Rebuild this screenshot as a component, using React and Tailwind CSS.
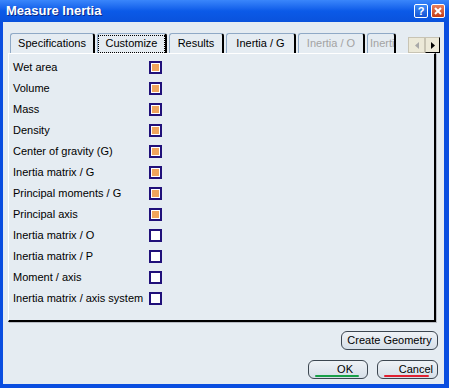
import React from "react";

const rows = [
  ["Wet area", true],
  ["Volume", true],
  ["Mass", true],
  ["Density", true],
  ["Center of gravity (G)", true],
  ["Inertia matrix / G", true],
  ["Principal moments / G", true],
  ["Principal axis", true],
  ["Inertia matrix / O", false],
  ["Inertia matrix / P", false],
  ["Moment / axis", false],
  ["Inertia matrix / axis system", false],
];

function Tab({ label, w, selected, disabled, cut }) {
  return (
    <div
      className={
        "h-[20px] flex items-center justify-center border-l border-t border-[#8fa9c6] border-r-2 border-r-black rounded-t-[3px] shrink-0 " +
        (disabled ? "text-[#a3a3a3] " : "text-black ") +
        (cut ? "border-r-0 justify-start pl-[2px] overflow-hidden " : "")
      }
      style={{ width: w }}
    >
      {selected ? (
        <span className="border border-dotted border-black px-[8px] h-[18px] flex items-center w-full justify-center">
          {label}
        </span>
      ) : (
        <span className="whitespace-nowrap">{label}</span>
      )}
    </div>
  );
}

function Check({ on }) {
  return (
    <div className="w-[13px] h-[13px] border-2 border-[#20107a] bg-white p-[1px] flex">
      {on && <div className="flex-1 bg-[#f0a55c]" />}
    </div>
  );
}

function Btn({ children, w, line, className = "" }) {
  return (
    <div
      className={
        "relative h-[19px] rounded-[6px] border border-[#3c4650] bg-gradient-to-b from-[#eef2f6] to-[#d6dfe8] flex items-center text-black " +
        className
      }
      style={{ width: w }}
    >
      {children}
      {line && (
        <div
          className={"absolute left-[6px] right-[8px] bottom-[1px] h-[2px] rounded-full " + line}
        />
      )}
    </div>
  );
}

export default function App() {
  return (
    <div
      className="w-[449px] h-[388px] bg-[#0a4ee0] flex flex-col text-[11px] overflow-hidden"
      style={{ fontFamily: "'Liberation Sans', Arial, sans-serif" }}
    >
      <div className="h-[22px] bg-gradient-to-b from-[#3a86fb] via-[#0b5ae8] to-[#0a52dc] flex items-center px-[6px] shrink-0">
        <span
          className="text-white font-bold flex-1"
          style={{ textShadow: "1px 1px 0 #0a2a8a", fontSize: 13 }}
        >
          Measure Inertia
        </span>
        <div className="flex gap-[3px] mr-[-2px]">
          <div className="w-[14px] h-[14px] rounded-[2px] border border-white bg-gradient-to-b from-[#3f8bf7] to-[#1553d4] text-white font-bold text-[11px] flex items-center justify-center leading-none">
            ?
          </div>
          <div className="w-[14px] h-[14px] rounded-[2px] border border-white bg-gradient-to-b from-[#e8805c] to-[#c43a12] flex items-center justify-center">
            <svg width="8" height="8" viewBox="0 0 8 8">
              <path d="M1 1 L7 7 M7 1 L1 7" stroke="white" strokeWidth="2" />
            </svg>
          </div>
        </div>
      </div>
      <div className="flex-1 ml-[3px] mr-[5px] mb-[4px] bg-[#e5ecf2] flex flex-col">
        <div className="flex items-end pl-[7px] pt-[11px] gap-[2px] h-[31px]">
          <Tab label="Specifications" w={85} />
          <Tab label="Customize" w={70} selected />
          <Tab label="Results" w={55} />
          <Tab label="Inertia / G" w={70} />
          <Tab label="Inertia / O" w={67} disabled />
          <Tab label="Inerti" w={29} disabled cut />
          <div className="flex ml-[10px] mb-[0px] h-[16px]">
            <div className="w-[17px] border border-[#c8c4b4] bg-[#ece9d8] flex items-center justify-center">
              <svg width="4" height="7" viewBox="0 0 4 7"><path d="M4 0 L0 3.5 L4 7Z" fill="#a8a8a8" /></svg>
            </div>
            <div className="w-[15px] border border-[#c8c4b4] border-r-black border-b-black bg-[#ece9d8] flex items-center justify-center">
              <svg width="4" height="7" viewBox="0 0 4 7"><path d="M0 0 L4 3.5 L0 7Z" fill="black" /></svg>
            </div>
          </div>
        </div>
        <div className="ml-[5px] w-[428px] h-[269px] border-l border-t border-white border-r-2 border-b-2 border-r-black border-b-black shadow-[1px_1px_0_#b8bcc4] pt-[3px] flex flex-col">
          {rows.map(([label, on]) => (
            <div key={label} className="h-[21px] flex items-center">
              <span className="w-[140px] pl-[4px] text-black whitespace-nowrap">{label}</span>
              <Check on={on} />
            </div>
          ))}
        </div>
        <div className="flex justify-end pr-[6px] mt-[9px]">
          <Btn w={97} className="justify-center h-[16px]">Create Geometry</Btn>
        </div>
        <div className="flex justify-end gap-[9px] pr-[6px] mt-[10px]">
          <Btn w={60} line="bg-[#18a048]" className="justify-end pr-[14px]">OK</Btn>
          <Btn w={61} line="bg-[#e02030]" className="justify-end pr-[4px]">Cancel</Btn>
        </div>
      </div>
    </div>
  );
}
